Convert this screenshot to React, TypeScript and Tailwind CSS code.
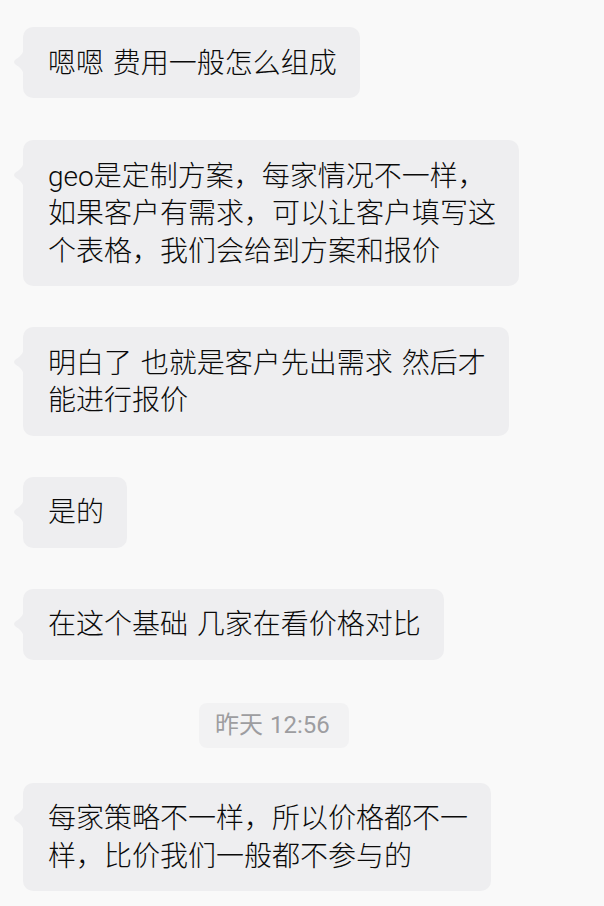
import React from "react";

const font = { fontFamily: 'Roboto, "Noto Sans CJK SC", sans-serif' };

function Bubble({ lines, className = "" }: { lines: string[]; className?: string }) {
  return (
    <div className={`relative self-start rounded-[10px] bg-[#eeeef0] pl-[25px] pr-[23px] pt-[17.5px] pb-[16px] text-[28px] leading-[37.5px] text-[#0a0a0a] font-light whitespace-pre [word-spacing:2px] ${className}`}>
      <svg
        className="absolute left-[-10px] top-[20px]"
        width="11"
        height="30"
        viewBox="0 0 11 30"
      >
        <path d="M11 0 C11 7 6 10 2 13 Q0 15 2 17 C6 20 11 23 11 30 Z" fill="#eeeef0" />
      </svg>
      {lines.map((l, i) => (
        <div key={i}>{l}</div>
      ))}
    </div>
  );
}

export default function App() {
  return (
    <div className="min-h-[906px] w-[604px] bg-[#f9f9f9] overflow-hidden" style={font}>
      <div className="flex flex-col pl-[23px] pt-[27px]">
        <Bubble lines={["嗯嗯 费用一般怎么组成"]} />
        <Bubble
          className="mt-[42px]"
          lines={["geo是定制方案，每家情况不一样，", "如果客户有需求，可以让客户填写这", "个表格，我们会给到方案和报价"]}
        />
        <Bubble className="mt-[41px]" lines={["明白了 也就是客户先出需求 然后才", "能进行报价"]} />
        <Bubble className="mt-[41px]" lines={["是的"]} />
        <Bubble className="mt-[41px]" lines={["在这个基础 几家在看价格对比"]} />
        <div className="self-start ml-[176px] mt-[43px] h-[45px] rounded-[8px] bg-[#f2f2f3] pl-[16px] pr-[19px] flex items-center text-[24px] text-[#9d9da0] [word-spacing:1px]">
          昨天 12:56
        </div>
        <Bubble className="mt-[35px]" lines={["每家策略不一样，所以价格都不一", "样，比价我们一般都不参与的"]} />
      </div>
    </div>
  );
}
